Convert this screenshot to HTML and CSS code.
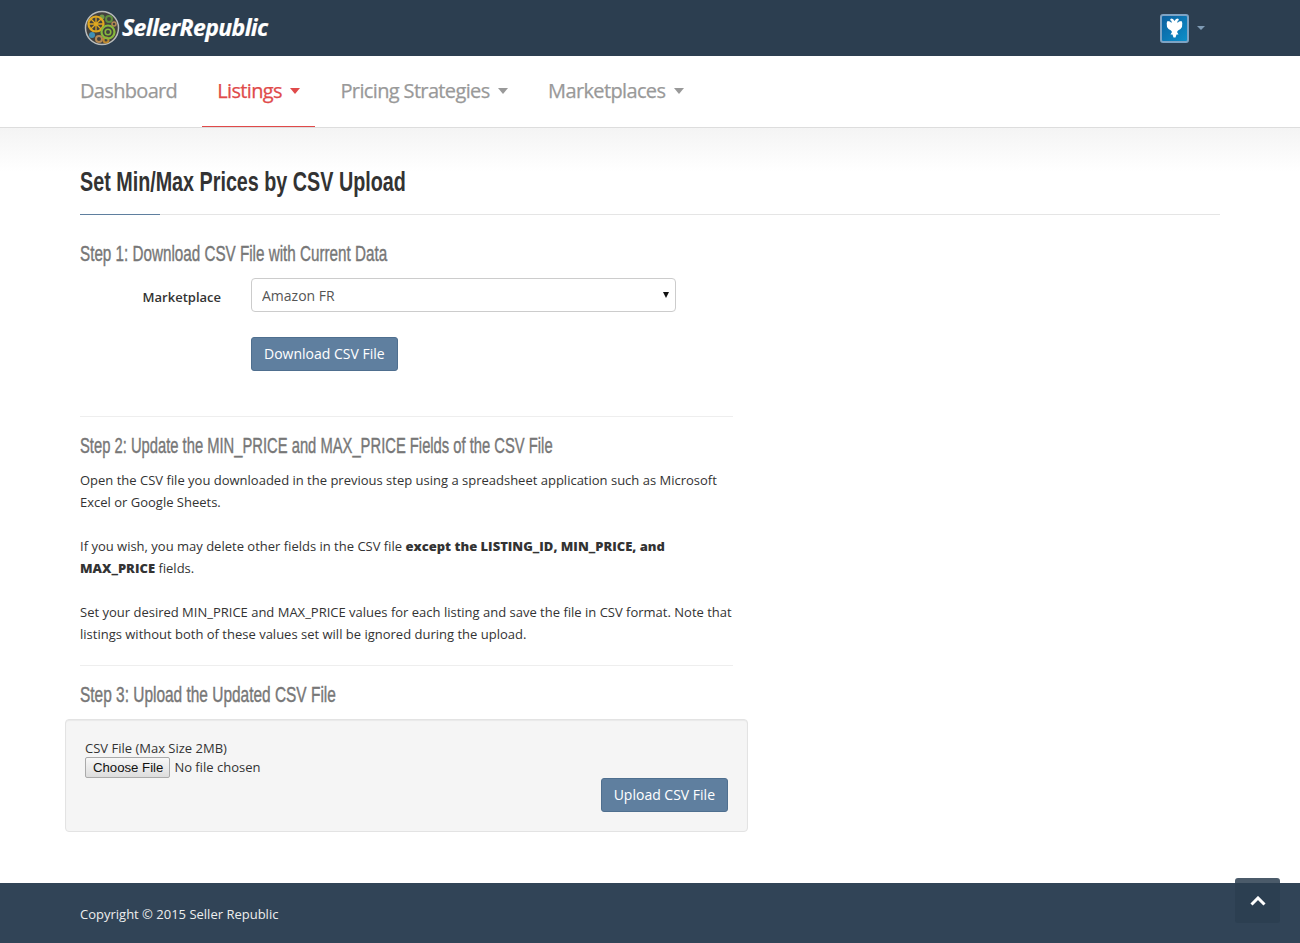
FILE: index.html
```html
<!DOCTYPE html>
<html lang="en">
<head>
    <meta charset="UTF-8">
    <meta name="viewport" content="width=device-width, initial-scale=1.0">
    <title>Seller Republic</title>
    <link rel="stylesheet" href="styles.css">
</head>
<body>
    <header class="topbar">
        <div class="container topbar-inner">
            <a href="#" class="brand">
                <svg class="brand-mark" width="36" height="36" viewBox="0 0 36 36">
                    <circle cx="18" cy="18" r="16.5" fill="#42413e" stroke="#b9bcbc" stroke-width="1.5"/>
                    <circle cx="25" cy="9" r="3" fill="none" stroke="#5f8f3e" stroke-width="2"/>
                    <circle cx="18" cy="7" r="2.5" fill="#6f9a4a"/>
                    <circle cx="30" cy="14" r="2" fill="none" stroke="#b58a55" stroke-width="1.5"/>
                    <circle cx="8" cy="25" r="3" fill="#3f8fb5"/>
                    <circle cx="15" cy="29" r="3" fill="none" stroke="#b58a55" stroke-width="2"/>
                    <circle cx="22" cy="30" r="2.5" fill="none" stroke="#c08a2e" stroke-width="2"/>
                    <circle cx="12" cy="14" r="7.5" fill="none" stroke="#e0a820" stroke-width="2.2"/>
                    <path d="M12 6.5v15M4.5 14h15M6.7 8.7l10.6 10.6M17.3 8.7L6.7 19.3" stroke="#e0a820" stroke-width="1.3"/>
                    <circle cx="24" cy="22" r="6.5" fill="none" stroke="#86b83c" stroke-width="2.2"/>
                    <circle cx="24" cy="22" r="2.8" fill="none" stroke="#86b83c" stroke-width="1.6"/>
                </svg>
                <span class="brand-name">SellerRepublic</span>
            </a>
            <a href="#" class="user-menu">
                <span class="avatar">
                    <svg width="17" height="20" viewBox="0 0 16 20">
                        <path fill="#fff" d="M8 3L6.5 1 4.5.5 3.5 2 5 3v2L3.500 3.500 1 3 .2 5l.3 4L2 11l2.500 1.500 1 1.500L4 16.500h2l1 3h2l1-3h2L10.500 14l1-1.500L14 11l1.500-2 .3-4L15 3l-2.500.5L11 5V3l1.500-1-1-1.500L9.500 1z"/>
                    </svg>
                </span>
                <span class="caret caret-user"></span>
            </a>
        </div>
    </header>

    <nav class="mainnav">
        <div class="container mainnav-inner">
            <a href="#" class="nav-item nav-first">Dashboard</a>
            <a href="#" class="nav-item active">Listings <span class="caret"></span></a>
            <a href="#" class="nav-item">Pricing Strategies <span class="caret"></span></a>
            <a href="#" class="nav-item">Marketplaces <span class="caret"></span></a>
        </div>
    </nav>

    <main class="page">
        <div class="container">
            <h1 class="page-title"><span class="page-title-text">Set Min/Max Prices by CSV Upload</span></h1>

            <div class="steps">
                <h2>Step 1: Download CSV File with Current Data</h2>
                <form class="market-form">
                    <div class="form-row">
                        <label class="form-label" for="marketplace">Marketplace</label>
                        <div class="select-wrap">
                            <select id="marketplace" class="form-select">
                                <option>Amazon FR</option>
                            </select>
                        </div>
                    </div>
                    <div class="form-actions">
                        <a href="#" class="button">Download CSV File</a>
                    </div>
                </form>

                <hr>

                <h2 class="step-two">Step 2: Update the MIN_PRICE and MAX_PRICE Fields of the CSV File</h2>
                <p>Open the CSV file you downloaded in the previous step using a spreadsheet application such as Microsoft Excel or Google Sheets.</p>
                <p>If you wish, you may delete other fields in the CSV file <strong>except the LISTING_ID, MIN_PRICE, and MAX_PRICE</strong> fields.</p>
                <p>Set your desired MIN_PRICE and MAX_PRICE values for each listing and save the file in CSV format. Note that listings without both of these values set will be ignored during the upload.</p>

                <hr class="hr-step3">

                <h2 class="step-three">Step 3: Upload the Updated CSV File</h2>
                <form class="well">
                    <label class="file-label" for="csv">CSV File (Max Size 2MB)</label>
                    <input type="file" id="csv" class="file-input">
                    <div class="well-actions">
                        <a href="#" class="button">Upload CSV File</a>
                    </div>
                </form>
            </div>
        </div>
    </main>

    <footer class="footer">
        <div class="container">Copyright © 2015 Seller Republic</div>
    </footer>
    <a href="#" class="to-top">
        <svg width="16" height="10" viewBox="0 0 16 10"><path d="M1.5 8.5L8 2l6.5 6.5" fill="none" stroke="#fff" stroke-width="3"/></svg>
    </a>
</body>
</html>
```

FILE: styles.css
```css
body {
    margin: 0;
    font-family: "Open Sans", sans-serif;
    font-size: 13px;
    line-height: 22px;
    color: #333;
    background-color: #fff;
}
a {
    text-decoration: none;
}
.container {
    width: 1140px;
    margin: 0 auto;
}

/* top bar */
.topbar {
    height: 56px;
    background-color: #2c3e50;
}
.topbar-inner {
    display: flex;
    justify-content: space-between;
    align-items: center;
    height: 56px;
}
.brand {
    display: flex;
    align-items: center;
    margin-left: 4px;
    margin-top: -2px;
}
.brand-name {
    margin-left: 2px;
    font-family: "Open Sans", sans-serif;
    font-size: 23px;
    font-weight: 700;
    font-style: italic;
    letter-spacing: -0.6px;
    color: #fff;
    -webkit-text-stroke: 0.2px #fff;
}
.brand-mark {
    margin-top: 2px;
}
.user-menu {
    display: flex;
    align-items: center;
    margin-right: 15px;
}
.avatar {
    display: flex;
    justify-content: center;
    align-items: center;
    width: 25px;
    height: 25px;
    border: 2px solid #7ea3c4;
    border-radius: 3px;
    background: linear-gradient(135deg, #0b5f9e, #0d8fc9);
}
.caret {
    display: inline-block;
    width: 0;
    height: 0;
    margin-left: 4px;
    vertical-align: 4px;
    border-top: 6px solid;
    border-left: 5.5px solid transparent;
    border-right: 5.5px solid transparent;
}
.caret-user {
    margin-left: 8px;
    border-top: 4px solid #7f9bb5;
    border-left: 4px solid transparent;
    border-right: 4px solid transparent;
}

/* main nav */
.mainnav {
    background-color: #fff;
    border-bottom: 1px solid #ddd;
}
.mainnav-inner {
    display: flex;
    height: 71px;
}
.nav-item {
    display: block;
    height: 71px;
    box-sizing: border-box;
    padding: 0 14.6px 0 15px;
    margin-right: 10.4px;
    font-size: 20px;
    line-height: 69px;
    letter-spacing: -0.64px;
    color: #999;
    -webkit-text-stroke: 0.25px;
}
.nav-first {
    padding: 0;
    margin-right: 25px;
    letter-spacing: -0.67px;
}
.nav-item.active {
    color: #e04a4a;
    border-bottom: 1px solid #e04a4a;
}

/* page */
.page {
    background: linear-gradient(#f4f4f4, #fff 44px);
    padding-top: 29px;
    padding-bottom: 51px;
}
.page-title {
    position: relative;
    margin: 0 0 24px;
    padding-bottom: 7px;
    border-bottom: 1px solid #e5e5e5;
    font-family: "Liberation Sans", sans-serif;
    font-size: 28px;
    line-height: 50px;
    font-weight: 700;
    color: #333;
}
.page-title-text {
    display: block;
    white-space: nowrap;
    transform: scaleX(0.705);
    transform-origin: left center;
}
.page-title::after {
    content: "";
    position: absolute;
    left: 0;
    bottom: -1px;
    width: 80px;
    height: 1px;
    background-color: #5f7f9f;
}
.steps {
    width: 653px;
}
h2 {
    margin: 0 0 8px;
    font-family: "Liberation Sans", sans-serif;
    font-size: 22px;
    line-height: 30px;
    font-weight: 400;
    color: #777;
    -webkit-text-stroke: 0.4px #777;
    white-space: nowrap;
    transform: scaleX(0.692);
    transform-origin: left center;
}
h2.step-two {
    transform: scaleX(0.671);
}
h2.step-three {
    transform: scaleX(0.702);
}
p {
    margin: 0 0 22px;
}
p:last-of-type {
    margin-bottom: 0;
}
strong {
    font-weight: 800;
    color: #333;
}
hr {
    margin: 45px 0 14px;
    border: 0;
    border-top: 1px solid #eee;
}
.hr-step3 {
    margin: 20px 0 14px;
}

/* forms */
.market-form {
    margin-top: 9px;
}
.form-row {
    display: flex;
    align-items: center;
}
.form-label {
    width: 141px;
    padding-top: 3px;
    text-align: right;
    font-weight: 600;
    color: #333;
}
.select-wrap {
    position: relative;
    margin-left: 30px;
}
.select-wrap::after {
    content: "";
    position: absolute;
    top: 14px;
    right: 7px;
    border-top: 6px solid #111;
    border-left: 3.5px solid transparent;
    border-right: 3.5px solid transparent;
}
.form-select {
    display: block;
    width: 425px;
    height: 34px;
    padding: 0 10px;
    border: 1px solid #ccc;
    border-radius: 4px;
    background-color: #fff;
    appearance: none;
    font-family: "Open Sans", sans-serif;
    font-size: 14px;
    color: #555;
}
.form-actions {
    margin-top: 25px;
    margin-left: 171px;
}
.button {
    display: inline-block;
    box-sizing: border-box;
    height: 34px;
    padding: 0 12px;
    border: 1px solid #4f6f8f;
    border-radius: 3px;
    background-color: #5f7f9f;
    font-size: 14px;
    line-height: 32px;
    color: #fff;
}
.well {
    margin: 9px -15px 0;
    padding: 19px;
    height: 113px;
    box-sizing: border-box;
    background-color: #f5f5f5;
    border: 1px solid #e3e3e3;
    border-radius: 4px;
    box-shadow: inset 0 1px 1px rgba(0, 0, 0, 0.05);
}
.file-label {
    display: block;
    line-height: 19px;
}
.file-input {
    display: block;
    margin-top: -1px;
    font-family: "Open Sans", sans-serif;
    font-size: 13px;
    color: #333;
}
.file-input::file-selector-button {
    height: 21px;
    padding: 0 6px 0 7px;
    border: 1px solid #aaa;
    border-radius: 2px;
    background: linear-gradient(#f8f8f8, #ddd);
    font-family: "Liberation Sans", sans-serif;
    font-size: 13.2px;
    color: #111;
}
.well-actions {
    display: flex;
    justify-content: flex-end;
}

/* footer */
.footer {
    height: 60px;
    background-color: #314457;
    color: #eee;
    line-height: 62px;
}
.to-top {
    position: absolute;
    top: 878px;
    left: 1235px;
    display: flex;
    justify-content: center;
    align-items: center;
    width: 45px;
    height: 45px;
    border-radius: 3px;
    background-color: rgba(44, 62, 80, 0.85);
}
```
